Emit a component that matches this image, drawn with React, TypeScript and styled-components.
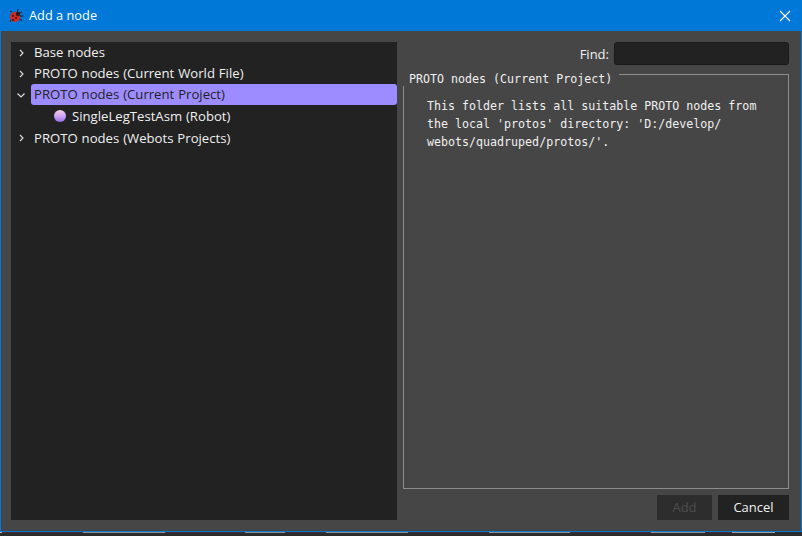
import React from "react";
import styled, { createGlobalStyle } from "styled-components";

const GlobalStyle = createGlobalStyle`
  html, body {
    margin: 0;
    padding: 0;
    background: #2b2b2b;
    overflow: hidden;
  }
`;

interface TreeItem {
  label: string;
  open?: boolean;
  selected?: boolean;
}

const treeItems: TreeItem[] = [
  { label: "Base nodes" },
  { label: "PROTO nodes (Current World File)" },
  { label: "PROTO nodes (Current Project)", open: true, selected: true },
];

// what shows of the window behind the dialog, under its bottom edge
const behindParts = [
  { w: 2, c: "#c8c0b0" },
  { w: 81, c: "#4a2b2b" },
  { w: 82, c: "#8f8f8f" },
  { w: 80, c: "#4a2b2b" },
  { w: 40, c: "#8f8f8f" },
  { w: 41, c: "#4a2b2b" },
  { w: 82, c: "#8f8f8f" },
  { w: 81, c: "#4a2b2b" },
  { w: 81, c: "#8f8f8f" },
  { w: 81, c: "#4a2b2b" },
  { w: 54, c: "#8f8f8f" },
  { w: 27, c: "#4a2b2b" },
  { w: 43, c: "#a0a0a0" },
];

const Chevron = ({ open }: { open?: boolean }) => (
  <ChevronSvg viewBox="0 0 10 10">
    <path d={open ? "M1.5 3.5 L5 7 L8.5 3.5" : "M4 2 L7 5 L4 8"} />
  </ChevronSvg>
);

const Bug = () => (
  <svg width="16" height="16" viewBox="0 0 16 16">
    <g stroke="#2a1a1a" strokeWidth="1" fill="none">
      <path d="M9 6 L10 1" />
      <path d="M11 6 L14 3.5" />
      <path d="M12 8 L15.5 8" />
      <path d="M11 11 L14 12.5" />
      <path d="M4 4 L2 3" />
      <path d="M3 12 L2 14" />
    </g>
    <ellipse cx="7" cy="9" rx="5" ry="5" fill="#d42a1c" />
    <circle cx="10" cy="6" r="2.2" fill="#2a1a1a" />
    <circle cx="5" cy="8" r="1" fill="#3a0d0d" />
    <circle cx="8" cy="10" r="1" fill="#3a0d0d" />
    <circle cx="5" cy="12" r="1" fill="#3a0d0d" />
  </svg>
);

const CloseIcon = () => (
  <svg width="12" height="12" viewBox="0 0 12 12">
    <path d="M1 1 L11 11 M11 1 L1 11" stroke="#fff" strokeWidth="1.2" />
  </svg>
);

const App: React.FC = () => {
  return (
    <>
      <GlobalStyle />
      <Window>
        <TitleBar>
          <TitleLeft>
            <Bug />
            <Title>Add a node</Title>
          </TitleLeft>
          <CloseIcon />
        </TitleBar>
        <Body>
          <Tree>
            {treeItems.map((item) => (
              <TreeRow key={item.label}>
                <Chevron open={item.open} />
                <RowLabel $selected={item.selected}>{item.label}</RowLabel>
              </TreeRow>
            ))}
            <ChildRow>
              <Ball />
              <RowLabel>SingleLegTestAsm (Robot)</RowLabel>
            </ChildRow>
            <LastRow>
              <Chevron />
              <RowLabel>PROTO nodes (Webots Projects)</RowLabel>
            </LastRow>
          </Tree>
          <Side>
            <FindRow>
              <FindLabel>Find:</FindLabel>
              <FindInput />
            </FindRow>
            <Group>
              <GroupTitle>PROTO nodes (Current Project)</GroupTitle>
              <Description>
                This folder lists all suitable PROTO nodes from
                <br />
                the local 'protos' directory: 'D:/develop/
                <br />
                webots/quadruped/protos/'.
              </Description>
            </Group>
            <Buttons>
              <AddButton disabled>Add</AddButton>
              <CancelButton>Cancel</CancelButton>
            </Buttons>
          </Side>
        </Body>
      </Window>
      <BehindStrip>
        {behindParts.map((part, i) => (
          <BehindPart key={i} $w={part.w} $c={part.c} />
        ))}
      </BehindStrip>
    </>
  );
};

const Window = styled.div`
  box-sizing: border-box;
  width: 802px;
  height: 532px;
  display: flex;
  flex-direction: column;
  background: #464646;
  border: 1px solid #0078d7;
  border-top: none;
  font-family: "Open Sans", "Noto Sans", sans-serif;
  color: #f0f0f0;
`;

const TitleBar = styled.div`
  height: 31px;
  flex-shrink: 0;
  background: #0078d7;
  display: flex;
  align-items: center;
  justify-content: space-between;
  padding: 0 10px 0 7px;
`;

const TitleLeft = styled.div`
  display: flex;
  align-items: center;
  gap: 5px;
`;

const Title = styled.span`
  color: #fff;
  font-size: 12.8px;
  padding-bottom: 2px;
`;

const Body = styled.div`
  flex: 1;
  display: flex;
  gap: 6px;
  padding: 11px 12px 11px 10px;
  min-height: 0;
`;

const Tree = styled.div`
  width: 386px;
  flex-shrink: 0;
  background: #222222;
`;

const TreeRow = styled.div`
  height: 21px;
  display: flex;
  align-items: center;
  padding-left: 5px;
`;

const LastRow = styled(TreeRow)`
  height: 22px;
`;

const ChildRow = styled(LastRow)`
  padding-left: 43px;
  gap: 3px;
`;

const ChevronSvg = styled.svg`
  width: 10px;
  height: 10px;
  margin-right: 5px;
  flex-shrink: 0;

  path {
    fill: none;
    stroke: #e0e0e0;
    stroke-width: 1.1;
  }
`;

const RowLabel = styled.span<{ $selected?: boolean }>`
  flex: ${({ $selected }) => ($selected ? 1 : "none")};
  font-size: 13.15px;
  word-spacing: 0.5px;
  line-height: 21px;
  height: 21px;
  padding-left: 3px;
  border-radius: 3px;
  white-space: nowrap;
  color: ${({ $selected }) => ($selected ? "#222222" : "#f0f0f0")};
  background: ${({ $selected }) => ($selected ? "#9d8cff" : "transparent")};
`;

const Ball = styled.span`
  width: 12px;
  height: 12px;
  border-radius: 50%;
  flex-shrink: 0;
  background: linear-gradient(180deg, #f4d0ee 0%, #d0a4f2 50%, #9a6cf0 100%);
`;

const Side = styled.div`
  flex: 1;
  display: flex;
  flex-direction: column;
  min-width: 0;
`;

const FindRow = styled.div`
  display: flex;
  justify-content: flex-end;
  align-items: center;
  gap: 5px;
  height: 23px;
`;

const FindLabel = styled.span`
  font-size: 13px;
`;

const FindInput = styled.div`
  width: 173px;
  height: 21px;
  background: #222222;
  border: 1px solid #1a1a1a;
  border-radius: 3px;
`;

const Group = styled.div`
  position: relative;
  flex: 1;
  margin-top: 9px;
  border: 1px solid #8c8c8c;
  padding: 22px 23px 0;
  font-family: "DejaVu Sans Mono", monospace;
`;

const GroupTitle = styled.span`
  position: absolute;
  top: -3px;
  left: -1px;
  padding: 0 7px 0 6px;
  background: #464646;
  font-size: 11.65px;
  line-height: 14px;
  color: #f0f0f0;
`;

const Description = styled.div`
  font-size: 11.65px;
  line-height: 18px;
  color: #f0f0f0;
`;

const Buttons = styled.div`
  display: flex;
  justify-content: flex-end;
  gap: 6px;
  margin-top: 6px;
`;

const AddButton = styled.button`
  width: 55px;
  height: 25px;
  border: none;
  padding: 0 0 2px;
  background: #2d2d2d;
  color: #4d4d4d;
  font: 13px "Open Sans", sans-serif;
`;

const CancelButton = styled(AddButton)`
  width: 71px;
  background: #222222;
  color: #f0f0f0;
`;

const BehindStrip = styled.div`
  display: flex;
  height: 1px;
`;

const BehindPart = styled.div<{ $w: number; $c: string }>`
  width: ${({ $w }) => $w}px;
  background: ${({ $c }) => $c};
`;

export default App;
